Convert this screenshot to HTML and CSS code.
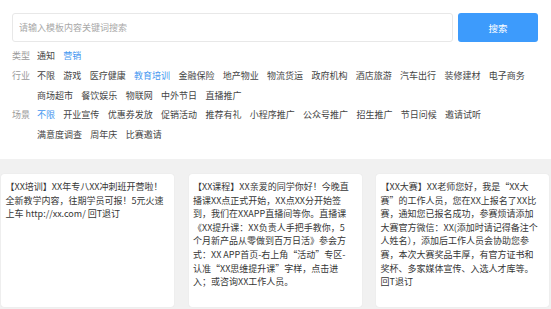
FILE: index.html
```html
<!DOCTYPE html>
<html lang="zh-CN">
<head>
<meta charset="utf-8">
<title>模板搜索</title>
<link rel="stylesheet" href="styles.css">
</head>
<body>
<div class="top">
  <div class="search">
    <input class="search-input" type="text" placeholder="请输入模板内容关键词搜索">
    <button class="search-btn" type="button">搜索</button>
  </div>
  <div class="filters">
    <div class="row">
      <span class="label">类型</span>
      <div class="items">
        <span class="item">通知</span>
        <span class="item active">营销</span>
      </div>
    </div>
    <div class="row">
      <span class="label">行业</span>
      <div class="items">
        <span class="item">不限</span>
        <span class="item">游戏</span>
        <span class="item">医疗健康</span>
        <span class="item active">教育培训</span>
        <span class="item">金融保险</span>
        <span class="item">地产物业</span>
        <span class="item">物流货运</span>
        <span class="item">政府机构</span>
        <span class="item">酒店旅游</span>
        <span class="item">汽车出行</span>
        <span class="item">装修建材</span>
        <span class="item">电子商务</span>
        <span class="item">商场超市</span>
        <span class="item">餐饮娱乐</span>
        <span class="item">物联网</span>
        <span class="item">中外节日</span>
        <span class="item">直播推广</span>
      </div>
    </div>
    <div class="row">
      <span class="label">场景</span>
      <div class="items">
        <span class="item active">不限</span>
        <span class="item">开业宣传</span>
        <span class="item">优惠券发放</span>
        <span class="item">促销活动</span>
        <span class="item">推荐有礼</span>
        <span class="item">小程序推广</span>
        <span class="item">公众号推广</span>
        <span class="item">招生推广</span>
        <span class="item">节日问候</span>
        <span class="item">邀请试听</span>
        <span class="item">满意度调查</span>
        <span class="item">周年庆</span>
        <span class="item">比赛邀请</span>
      </div>
    </div>
  </div>
</div>
<div class="cards">
  <div class="card">【XX培训】XX年专八XX冲刺班开营啦！全新教学内容，往期学员可报！5元火速上车 http://xx.com/ 回T退订</div>
  <div class="card">【XX课程】XX亲爱的同学你好！今晚直播课XX点正式开始，XX点XX分开始签到，我们在XXAPP直播间等你。直播课《XX提升课：XX负责人手把手教你，5个月新产品从零做到百万日活》参会方式：XX APP首页-右上角“活动”专区-认准“XX思维提升课”字样，点击进入；或咨询XX工作人员。</div>
  <div class="card">【XX大赛】XX老师您好，我是“XX大赛”的工作人员，您在XX上报名了XX比赛，通知您已报名成功，参赛烦请添加大赛官方微信：XX(添加时请记得备注个人姓名），添加后工作人员会协助您参赛，本次大赛奖品丰厚，有官方证书和奖杯、多家媒体宣传、入选人才库等。回T退订</div>
</div>
</body>
</html>
```
FILE: styles.css
```css
html, body {
  margin: 0;
  padding: 0;
  background: #ffffff;
}
body {
  font-family: "Noto Sans CJK SC", "Noto Sans", sans-serif;
  font-size: 9px;
  color: #333333;
  width: 551px;
  height: 309px;
  overflow: hidden;
}
.top {
  padding: 13px 13px 0 12px;
}
.search {
  display: flex;
  gap: 5px;
  height: 29px;
}
.search-input {
  flex: 1;
  min-width: 0;
  box-sizing: border-box;
  height: 29px;
  margin: 0;
  border: 1px solid #e8e8e8;
  border-radius: 3px;
  padding: 0 6px;
  font-family: "Noto Sans CJK SC", sans-serif;
  font-size: 9px;
  color: #333;
  outline: none;
  background: #fff;
}
.search-input::placeholder {
  color: #a8a8a8;
}
.search-btn {
  width: 80px;
  height: 29px;
  margin: 0;
  border: none;
  border-radius: 3px;
  background: #3d9bfc;
  color: #ffffff;
  font-family: "Noto Sans CJK SC", sans-serif;
  font-size: 9.5px;
  padding: 0;
}
.filters {
  margin-top: 4px;
  line-height: 19.8px;
}
.row {
  display: flex;
}
.label {
  width: 25px;
  flex: none;
  color: #9a9a9a;
}
.items {
  flex: 1;
  display: flex;
  flex-wrap: wrap;
}
.item {
  margin-right: 8.33px;
  color: #444444;
  white-space: nowrap;
}
.item.active {
  color: #4597f0;
}
.cards {
  margin-top: 14px;
  background: #f1f1f1;
  padding: 15px 0 2px 1px;
  display: grid;
  grid-template-columns: repeat(3, 173px);
  column-gap: 14.5px;
}
.card {
  box-sizing: border-box;
  height: 133px;
  background: #ffffff;
  border-radius: 3px;
  box-shadow: 0 0 1px rgba(0, 0, 0, 0.12);
  padding: 6px 9.2px 6px 4.5px;
  line-height: 13.6px;
  color: #363636;
}
```
